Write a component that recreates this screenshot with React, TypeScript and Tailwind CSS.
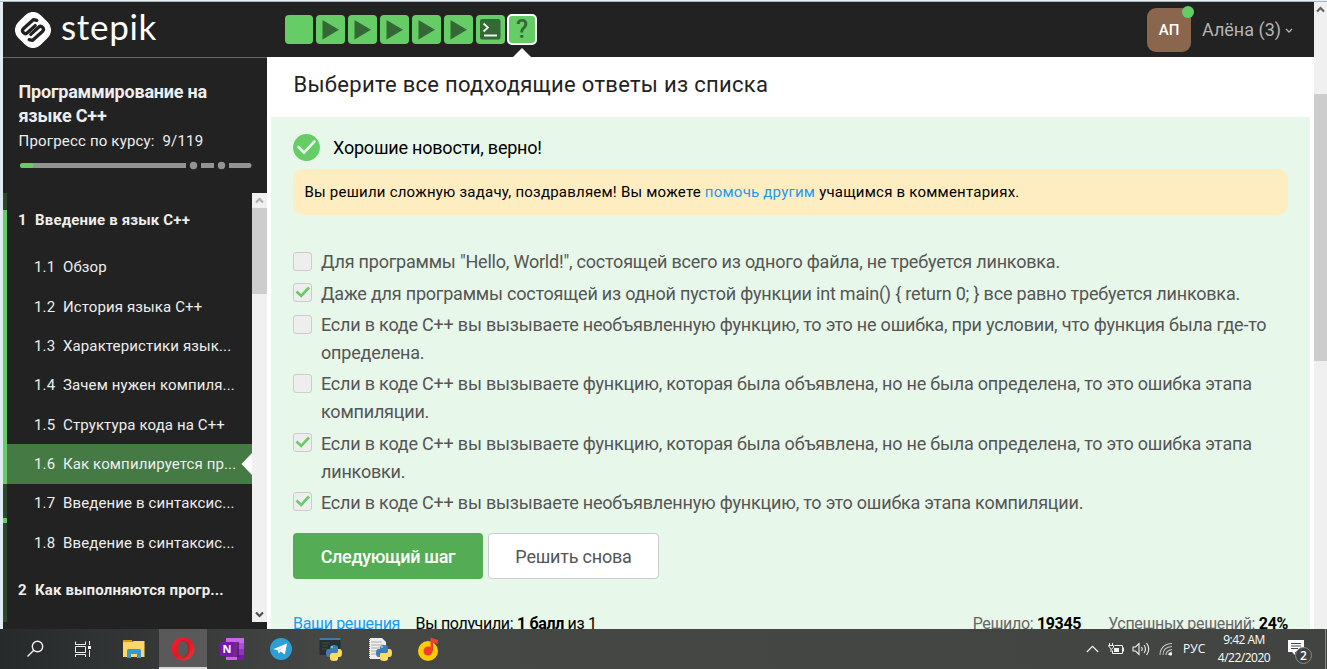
import type { ReactNode } from "react";

const lessons = [
  ["1.1", "Обзор"],
  ["1.2", "История языка C++"],
  ["1.3", "Характеристики язык..."],
  ["1.4", "Зачем нужен компиля..."],
  ["1.5", "Структура кода на C++"],
  ["1.6", "Как компилируется пр..."],
  ["1.7", "Введение в синтаксис..."],
  ["1.8", "Введение в синтаксис..."],
];

function Logo() {
  return (
    <svg width="36" height="36" viewBox="0 0 36 36" className="shrink-0">
      <rect x="2" y="2" width="32" height="32" rx="11" transform="rotate(45 18 18)" fill="#fff" />
      <g fill="none" stroke="#222" strokeWidth="3.3" strokeLinecap="round" strokeLinejoin="round">
        <path d="M21.800 8.400 L18.600 7.600 L8.300 16.800 Q6.600 18.800 8.400 20.600 Q10.400 22.600 12.400 20.800 L20.200 13.600" />
        <path d="M14.200 27.600 L17.400 28.400 L27.700 19.200 Q29.400 17.200 27.600 15.400 Q25.600 13.400 23.600 15.200 L15.800 22.400" />
      </g>
    </svg>
  );
}

function VideoStep() {
  return (
    <div className="flex h-[29px] w-[29px] items-center justify-center rounded-[4px] bg-[#66cc66]">
      <svg width="29" height="29" viewBox="0 0 29 29">
        <path d="M6.5 5v19.500L23 14.700z" fill="#356835" />
      </svg>
    </div>
  );
}

function Header() {
  return (
    <header className="flex h-[55px] shrink-0 bg-[#222222]">
      <div className="flex w-[264px] shrink-0 items-center pt-px pl-3">
        <Logo />
        <span className="-mt-[8px] ml-[10px] font-['Lato'] text-[35px] leading-[40px] tracking-[0.7px] text-white">stepik</span>
      </div>
      <div className="flex flex-1 items-start gap-[3px] pt-[13px] pl-[18px]">
        <div className="h-[29px] w-[28px] rounded-[4px] bg-[#66cc66]" />
        <VideoStep />
        <VideoStep />
        <VideoStep />
        <VideoStep />
        <VideoStep />
        <div className="flex h-[29px] w-[29px] items-center justify-center rounded-[4px] bg-[#66cc66]">
          <svg width="21" height="21" viewBox="0 0 21 21">
            <rect width="20.500" height="20.500" rx="2" fill="#356835" />
            <path d="M3.500 4.500l4.500 4-4.500 4M4 16.500h13" fill="none" stroke="#e8f5e8" strokeWidth="1.800" />
          </svg>
        </div>
        <div className="relative -mt-px -ml-px flex h-[31px] w-[30px] items-center justify-center rounded-[5px] border-2 border-white bg-[#66cc66] font-['Roboto'] text-[25px] leading-[27px] font-medium text-[#356835]">
          ?
          <svg className="absolute top-[31px] left-[2px]" width="22" height="12" viewBox="0 0 22 12">
            <path d="M11 1L1 11V12H21V11z" fill="#fff" />
          </svg>
        </div>
      </div>
      <div className="flex w-[167px] shrink-0 items-start pt-[6px]">
        <div className="relative flex h-11 w-11 items-center justify-center rounded-[9px] bg-[#8b664f] text-[15px] font-medium text-white">
          АП
          <span className="absolute -top-[2px] -right-[3px] h-3 w-3 rounded-full bg-[#66cc66]" />
        </div>
        <span className="ml-[11px] text-[18px] leading-[44px] whitespace-nowrap text-[#b4b4b4]">Алёна (3)</span>
        <svg className="mt-[20px] ml-[4px]" width="8" height="6" viewBox="0 0 8 6">
          <path d="M1 1l3 3 3-3" fill="none" stroke="#b4b4b4" strokeWidth="1.300" />
        </svg>
      </div>
    </header>
  );
}

function Chevron({ down = false, color }: { down?: boolean; color: string }) {
  return (
    <svg width="9" height="7" viewBox="0 0 9 7" className={down ? "rotate-180" : ""}>
      <path d="M1 5.500l3.500-3.500 3.500 3.500" fill="none" stroke={color} strokeWidth="2.200" />
    </svg>
  );
}

function Sidebar() {
  return (
    <aside className="flex w-[264px] shrink-0 flex-col bg-[#222222] text-[#eeeeee]">
      <div className="h-[136px] shrink-0 border-t border-[#666666] pt-[22px] pl-[15.500px]">
        <div className="text-[18px] leading-[24px] font-bold tracking-[-0.2px] whitespace-nowrap">
          Программирование на
          <br />
          языке C++
        </div>
        <div className="mt-[2px] text-[15px] leading-[23px] tracking-[0.18px] whitespace-pre">Прогресс по курсу:  9/119</div>
        <svg className="mt-[7px] -ml-[0.5px]" width="236" height="10" viewBox="0 0 236 10">
          <g stroke="#939393" strokeWidth="5">
            <path d="M5 5.500H168M183 5.500H196M211 5.500H231" />
            <path d="M5 5.500h1M231 5.500h0" strokeLinecap="round" />
          </g>
          <circle cx="175.500" cy="5.500" r="3.700" fill="#939393" />
          <circle cx="203.500" cy="5.500" r="3.700" fill="#939393" />
          <path d="M4.500 5.500H13" stroke="#66cc66" strokeWidth="5" strokeLinecap="round" />
        </svg>
      </div>
      <div className="flex h-[429px] shrink-0">
        <div className="flex w-1 shrink-0 flex-col bg-[#2f452f]">
          <div className="mt-[17px] h-[274px] bg-[#66cc66]" />
          <div className="mt-[34px] h-[5px] bg-[#66cc66]" />
        </div>
        <nav className="w-[245px] shrink-0 overflow-hidden text-[15px] whitespace-nowrap">
          <div className="flex h-[54.3px] items-center pl-[11px] font-bold tracking-[0.18px]">
            <span className="w-[17px]">1</span>Введение в язык C++
          </div>
          {lessons.map(([n, title]) => (
            <div
              key={n}
              className={
                n === "1.6"
                  ? "relative flex h-[39.375px] items-center bg-[#457a45] pt-[0.9px] pl-[27px] tracking-[0.12px]"
                  : "flex h-[39.375px] items-center pt-[0.9px] pl-[27px] tracking-[0.12px]"
              }
            >
              <span className="w-[29px]">{n}</span>
              {title}
              {n === "1.6" && (
                <svg className="absolute top-[9px] right-0" width="11" height="22" viewBox="0 0 11 22">
                  <path d="M11 0L0.500 11L11 22z" fill="#fff" />
                </svg>
              )}
            </div>
          ))}
          <div className="flex h-[56px] items-center pl-[11px] font-bold tracking-[0.14px]">
            <span className="w-[17px]">2</span>Как выполняются прогр...
          </div>
        </nav>
        <div className="flex w-[15px] flex-col items-center bg-[#f0f0f0]">
          <div className="flex h-[15px] items-center">
            <Chevron color="#b0b0b0" />
          </div>
          <div className="h-[86px] w-full bg-[#cdcdcd]" />
          <div className="mt-auto flex h-[15px] items-center">
            <Chevron down color="#505050" />
          </div>
        </div>
      </div>
    </aside>
  );
}

function Option({ checked = false, className, children }: { checked?: boolean; className: string; children: ReactNode }) {
  return (
    <label className={"flex items-start text-[18px] leading-[28px] tracking-[-0.207px] whitespace-nowrap text-[#555555] " + className}>
      <span className="mt-[4px] mr-[9px] flex h-[19px] w-[19px] shrink-0 items-center justify-center rounded-[3px] border border-[#cccccc] bg-[#eeeeee]">
        {checked && (
          <svg width="17" height="17" viewBox="0 0 17 17">
            <path d="M2.500 7.500l4.700 4.500 7.800-8.500" fill="none" stroke="#66cc66" strokeWidth="2.600" />
          </svg>
        )}
      </span>
      <span>{children}</span>
    </label>
  );
}

function Content() {
  return (
    <main className="flex min-w-0 flex-1 flex-col bg-white px-1">
      <h1 className="h-[60px] shrink-0 pl-[22.500px] text-[22px] leading-[55px] tracking-[0.29px] text-[#222222]">
        Выберите все подходящие ответы из списка
      </h1>
      <section className="flex flex-1 flex-col bg-[#e7f7e9] pl-[22px]">
        <div className="flex h-[52px] shrink-0 items-center pt-[8px] text-[18px] tracking-[-0.21px] text-black">
          <svg width="27" height="27" viewBox="0 0 27 27" className="mr-[13px]">
            <circle cx="13.500" cy="13.500" r="13.400" fill="#66cc66" />
            <path d="M5.500 13l5.500 5.700L21.500 7.500" fill="none" stroke="#e7f7e9" strokeWidth="2.600" strokeLinecap="round" />
          </svg>
          Хорошие новости, верно!
        </div>
        <div className="flex h-[46px] w-[995px] shrink-0 items-center rounded-[10px] bg-[#ffedc2] pl-[11.500px] text-[15px] tracking-[0.22px] whitespace-pre text-black">
          Вы решили сложную задачу, поздравляем! Вы можете <span className="text-[#1a9af5]">помочь другим</span> учащимся в комментариях.
        </div>
        <div className="mt-[33px] flex flex-col">
          <Option className="h-[31px]">Для программы "Hello, World!", состоящей всего из одного файла, не требуется линковка.</Option>
          <Option checked className="h-[32px] [&>span:last-child]:pt-px">
            Даже для программы состоящей из одной пустой функции int main() {"{"} return 0; {"}"} все равно требуется линковка.
          </Option>
          <Option className="h-[59px]">
            Если в коде C++ вы вызываете необъявленную функцию, то это не ошибка, при условии, что функция была где-то
            <br />
            определена.
          </Option>
          <Option className="h-[59px]">
            Если в коде C++ вы вызываете функцию, которая была объявлена, но не была определена, то это ошибка этапа
            <br />
            компиляции.
          </Option>
          <Option checked className="h-[59px] [&>span:last-child]:pt-px">
            Если в коде C++ вы вызываете функцию, которая была объявлена, но не была определена, то это ошибка этапа
            <br />
            линковки.
          </Option>
          <Option checked className="h-[45px] [&>span:last-child]:pt-px">
            Если в коде C++ вы вызываете необъявленную функцию, то это ошибка этапа компиляции.
          </Option>
        </div>
        <div className="flex shrink-0 gap-[5px] text-[18px]">
          <button className="h-[46px] w-[190px] rounded-[4px] bg-[#54ad54] font-medium tracking-[-0.33px] text-white">Следующий шаг</button>
          <button className="h-[46px] w-[171px] rounded-[4px] border border-[#cccccc] bg-white tracking-[-0.21px] text-[#555555]">Решить снова</button>
        </div>
        <div className="mt-[34px] flex h-5 w-[995px] shrink-0 text-[16px] leading-[22px] tracking-[-0.33px] whitespace-pre text-black">
          <span className="text-[#1a9af5]">Ваши решения</span>
          <span className="ml-[15.500px]">
            Вы получили: <b>1 балл</b> из 1
          </span>
          <span className="ml-auto text-[#666666]">
            Решило: <b className="text-black">19345</b>
          </span>
          <span className="ml-[27px] text-[#666666]">
            Успешных решений: <b className="text-black">24%</b>
          </span>
        </div>
      </section>
    </main>
  );
}

function Python({ x, y }: { x: number; y: number }) {
  return (
    <g transform={`translate(${x} ${y})`}>
      <path d="M4 4V2.500Q4 0 8 0t4 2.500V6Q12 8 10 8H6Q4 8 4 10v2H2.500Q0 12 0 8t2.500-4H8z" fill="#3d7fb5" />
      <path d="M12 12v1.500Q12 16 8 16t-4-2.500V10Q4 8 6 8h4q2 0 2-2V4h1.500Q16 4 16 8t-2.500 4H8z" fill="#ffdc55" />
      <circle cx="6" cy="2" r="0.800" fill="#fff" />
      <circle cx="10" cy="14" r="0.800" fill="#fff" />
    </g>
  );
}

function Taskbar() {
  return (
    <footer className="flex h-10 shrink-0 items-center bg-linear-to-r from-[#272a2b] via-[#454845] via-25% to-[#424442] text-white">
      <svg width="18" height="18" viewBox="0 0 18 18" className="ml-[26px]">
        <circle cx="11.500" cy="6.500" r="5.200" fill="none" stroke="#f0f0f0" strokeWidth="1.400" />
        <path d="M8 10L1.500 16.500" stroke="#f0f0f0" strokeWidth="1.400" />
      </svg>
      <svg width="18" height="17" viewBox="0 0 18 17" className="ml-[30px]">
        <path d="M1.500 0.500V3.500H11.500V0.500M1.500 16V13.500H11.500V16M1.500 5.500H11.500V11.500H1.500zM15.500 0V4M15.500 9V16" fill="none" stroke="#f0f0f0" />
        <path d="M14 5h3v3h-3z" fill="#fff" />
      </svg>
      <svg width="22" height="20" viewBox="0 0 22 20" className="ml-[31px]">
        <path d="M0 1h9l1 3H0z" fill="#e09b13" />
        <path d="M0 3h9l2-1h10.500v16H0z" fill="#ffd766" />
        <path d="M4 11.500Q4 10 5.500 10h11Q18 10 18 11.500V19h-4v-4H8v4H4z" fill="#3497dc" />
      </svg>
      <div className="ml-[14px] flex h-10 w-12 items-center justify-center border-b-2 border-[#d8d8d8] bg-[#585958] pt-px">
        <svg width="24" height="24" viewBox="0 0 24 24">
          <defs>
            <linearGradient id="opera" x1="0" y1="0" x2="1" y2="1">
              <stop offset="0" stopColor="#ff1b2d" />
              <stop offset="0.500" stopColor="#e51525" />
              <stop offset="1" stopColor="#e83a3a" />
            </linearGradient>
          </defs>
          <path
            fillRule="evenodd"
            d="M12 0.500a11.500 11.500 0 1 0 0 23a11.500 11.500 0 1 0 0-23zM12 4c3.500 0 5 3.500 5 8s-1.500 8-5 8s-5-3.500-5-8s1.500-8 5-8z"
            fill="url(#opera)"
          />
          <path d="M8.500 4.500Q12 1.500 16 4.500Q19 8 19 12t-3 7.500Q13 22 10 20Q17 20 17 12T12 4Q10 4 8.500 4.500z" fill="#a41a20" opacity=".5" />
        </svg>
      </div>
      <svg width="24" height="24" viewBox="0 0 24 24" className="ml-[13px]">
        <path d="M6 1h18v22H6z" fill="#ca64ea" />
        <path d="M17 6h7v6h-7z" fill="#ae4bd5" />
        <path d="M17 12h7v6h-7z" fill="#9332bf" />
        <path d="M17 18h7v5h-7z" fill="#7719aa" />
        <path d="M6 5h13v15H6z" fill="#4b116b" opacity=".7" />
        <rect y="5" width="14" height="14" rx="1" fill="#7719aa" />
        <text x="7" y="16" textAnchor="middle" fontFamily="Open Sans, sans-serif" fontSize="11" fontWeight="700" fill="#fff">N</text>
      </svg>
      <svg width="22" height="22" viewBox="0 0 22 22" className="ml-[26px]">
        <circle cx="11" cy="11" r="11" fill="#2b9fd6" />
        <path d="M3.500 11L17 5.500L14.800 16.500L10.700 13.500L8.700 15.500L8 12.500z" fill="#fff" />
        <path d="M8 12.500L14 8L9.500 13z" fill="#b7d8e8" />
      </svg>
      <svg width="24" height="24" viewBox="0 0 24 24" className="ml-[27px]">
        <path d="M0.500 1h21v17H0.500z" fill="#272f31" />
        <path d="M0.500 1h21v2H0.500z" fill="#4879a1" />
        <path d="M3 6h8M3 9h6M3 12h5" stroke="#355b38" />
        <Python x={7} y={8} />
      </svg>
      <svg width="24" height="24" viewBox="0 0 24 24" className="ml-[25px]">
        <path d="M1 1h13l4 4v17H1z" fill="#efefef" />
        <path d="M3 5h11M3 8h13M3 11h10M3 14h8M3 17h8" stroke="#aaa" />
        <path d="M1.500 1v21" stroke="#555" strokeDasharray="1 1" />
        <Python x={8} y={8} />
      </svg>
      <svg width="22" height="25" viewBox="0 0 22 25" className="ml-[26px]">
        <circle cx="10" cy="14" r="10" fill="#fc0" />
        <circle cx="10" cy="14" r="4.500" fill="#f33d34" />
        <path d="M12.500 14V0.500l7.500 2.500v4l-5-1.500V14z" fill="#f33d34" />
      </svg>
      <div className="ml-auto flex h-10 items-center font-['Open_Sans'] text-[12px]">
        <svg width="13" height="8" viewBox="0 0 13 8">
          <path d="M0.800 7L6.500 1.300L12.200 7" fill="none" stroke="#f0f0f0" strokeWidth="1.300" />
        </svg>
        <svg width="17" height="13" viewBox="0 0 17 13" className="ml-[9px]">
          <path d="M6.500 2.500h8v8h-10v-3M15.500 4.500v4M1.500 0v2M4.500 0v2M0.500 2.500h5v2l-2 1.500l-2-1.500zM3 6v3" fill="none" stroke="#f0f0f0" />
          <path d="M6 5h5v4H6z" fill="#f0f0f0" />
        </svg>
        <svg width="18" height="14" viewBox="0 0 18 14" className="ml-[7px]">
          <path d="M1 5h2.500L7 1.500v11L3.500 9H1zM9.500 5q1.500 2 0 4M12 3q3 4 0 8M14.500 1q4.500 6 0 12" fill="none" stroke="#f0f0f0" strokeWidth="1.100" />
        </svg>
        <svg width="14" height="14" viewBox="0 0 14 14" className="ml-[9px]">
          <path d="M1 13C1 6 6 1.500 13 1.500M4 13q0-8 9-8.500M7 13q0-4.500 6-5.500M9.500 13q0-2 3.500-3" fill="none" stroke="#c5c5c5" strokeWidth="1.100" />
          <circle cx="11.500" cy="12" r="1.600" fill="#fff" />
        </svg>
        <span className="ml-[10px] w-[23px] text-[12px]">РУС</span>
        <div className="ml-[10px] w-[56px] text-center text-[12px] leading-[18px] tracking-[-0.5px] whitespace-nowrap">
          9:42 AM
          <br />
          4/22/2020
        </div>
        <svg width="25" height="26" viewBox="0 0 25 26" className="mt-[5px] ml-[16px]">
          <path d="M0 1h16v12H7v3l-3-3H0z" fill="#fff" />
          <path d="M3 4.500h10M3 7h10M3 9.500h7" stroke="#444744" />
          <circle cx="15.500" cy="16.500" r="8" fill="#414341" stroke="#888" />
          <text x="15.500" y="21" textAnchor="middle" fontFamily="Open Sans, sans-serif" fontSize="12" fontWeight="600" fill="#fff">2</text>
        </svg>
        <div className="ml-[12px] h-10 w-[2px] border-l border-[#858785]" />
      </div>
    </footer>
  );
}

export default function App() {
  return (
    <div className="flex h-[669px] w-[1327px] flex-col overflow-hidden bg-[#222222] font-['Roboto',sans-serif]">
      <div className="h-[2px] shrink-0 border-b border-[#aab8c2] bg-[#e8eef2]" />
      <div className="flex h-[627px] shrink-0 overflow-hidden">
        <div className="w-[3px] shrink-0 bg-[#e1ebf3]" />
        <div className="flex w-[1311px] shrink-0 flex-col">
          <Header />
          <div className="flex h-[572px] shrink-0 overflow-hidden">
            <Sidebar />
            <Content />
          </div>
        </div>
        <div className="flex w-[13px] shrink-0 flex-col items-center bg-[#f0f0f0]">
          <div className="flex h-[15px] items-center">
            <Chevron color="#606060" />
          </div>
          <div className="mt-[77px] h-[267px] w-full bg-[#cdcdcd]" />
        </div>
      </div>
      <Taskbar />
    </div>
  );
}
